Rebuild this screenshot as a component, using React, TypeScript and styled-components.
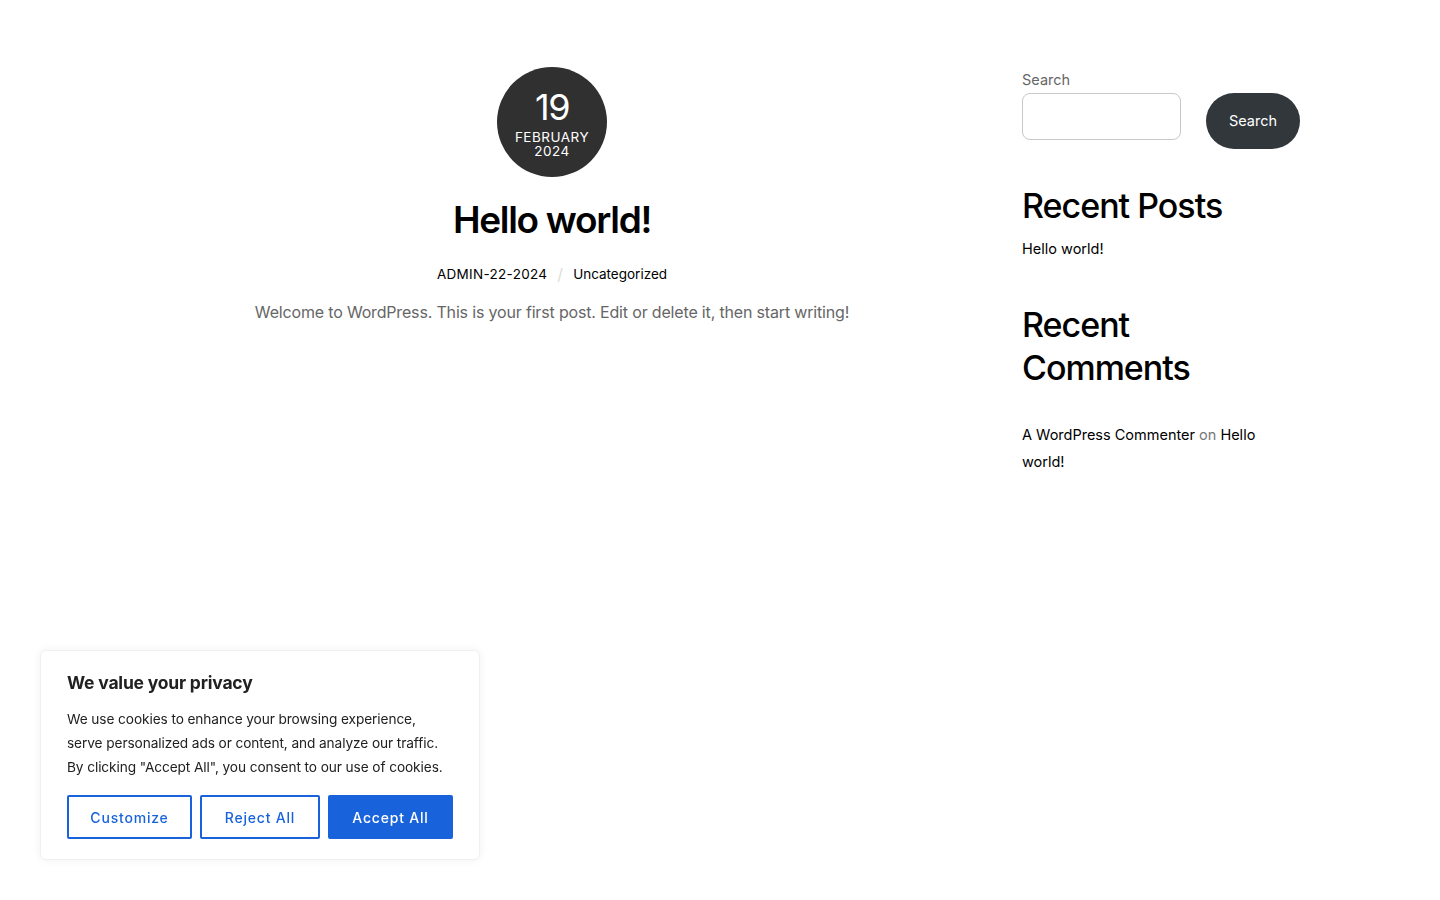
import React from "react";
import styled, { createGlobalStyle } from "styled-components";

const Global = createGlobalStyle`
  html, body { margin: 0; padding: 0; background: #fff; }
  body { font-family: Inter, "Liberation Sans", sans-serif; color: #000; }
  * { box-sizing: border-box; }
`;

const Page = styled.div`
  width: 1440px;
  min-height: 900px;
  display: grid;
  grid-template-columns: 1022px 278px;
  padding-top: 67px;
`;

const Main = styled.main`
  display: flex;
  justify-content: center;
  padding-left: 82px;
`;

const Article = styled.article`
  display: flex;
  flex-direction: column;
  align-items: center;
`;

const DateBadge = styled.div`
  width: 110px;
  height: 110px;
  border-radius: 50%;
  background: #303030;
  color: #fff;
  display: flex;
  flex-direction: column;
  align-items: center;
  justify-content: center;
  padding-top: 4px;
`;

const Day = styled.span`
  font-size: 36px;
  line-height: 34px;
  letter-spacing: -1.5px;
  font-weight: 400;
`;

const Month = styled.span<{ $gap?: number }>`
  font-size: 13.5px;
  line-height: 14px;
  letter-spacing: 0.5px;
  margin-top: ${(p) => p.$gap ?? 0}px;
`;

const Title = styled.h1`
  margin: 20px 0 0;
  font-size: 37px;
  line-height: 46px;
  font-weight: 600;
  letter-spacing: -1.3px;
`;

const Meta = styled.div`
  margin-top: 21px;
  display: flex;
  align-items: center;
  gap: 10px;
  font-size: 13.5px;
  line-height: 20px;
`;

const Author = styled.span`
  text-transform: uppercase;
  letter-spacing: 0.3px;
`;

const Sep = styled.span`
  color: #ddd;
  font-size: 16px;
`;

const Excerpt = styled.p`
  margin: 16px 0 0;
  font-size: 16px;
  line-height: 24px;
  color: #666;
  letter-spacing: -0.17px;
  white-space: nowrap;
`;

const Sidebar = styled.aside`
  display: flex;
  flex-direction: column;
  padding-top: 3px;
`;

const Label = styled.label`
  font-size: 14.5px;
  line-height: 20px;
  color: #666;
`;

const SearchRow = styled.div`
  display: flex;
  align-items: flex-start;
  gap: 25px;
  margin-top: 3px;
`;

const Input = styled.input`
  width: 159px;
  height: 47px;
  border: 1px solid #c8c8c8;
  border-radius: 8px;
  outline: none;
`;

const SearchButton = styled.button`
  width: 94px;
  height: 56px;
  border: none;
  border-radius: 28px;
  background: #32373c;
  color: #fff;
  font-family: inherit;
  font-size: 14.5px;
  padding-bottom: 2px;
`;

const WidgetTitle = styled.h2<{ $top: number }>`
  margin: ${(p) => p.$top}px 0 0;
  font-size: 34px;
  line-height: 43px;
  font-weight: 500;
  letter-spacing: -1px;
`;

const WidgetText = styled.p<{ $top: number }>`
  margin: ${(p) => p.$top}px 0 0;
  font-size: 14.5px;
  line-height: 27px;
  color: #000;
`;

const Muted = styled.span`
  color: #777;
`;

const Banner = styled.div`
  position: fixed;
  left: 40px;
  top: 650px;
  width: 440px;
  height: 210px;
  background: #fff;
  border: 1px solid #f0f0f0;
  border-radius: 6px;
  box-shadow: 0 0 10px rgba(0, 0, 0, 0.06);
  padding: 20px 28px 20px 26px;
  color: #212121;
`;

const BannerTitle = styled.h3`
  margin: 0;
  font-size: 17.5px;
  line-height: 24px;
  font-weight: 700;
  letter-spacing: -0.2px;
`;

const BannerText = styled.p`
  margin: 12px 0 0;
  font-size: 13.7px;
  line-height: 24px;
  letter-spacing: -0.1px;
`;

const Buttons = styled.div`
  display: flex;
  gap: 8px;
  margin-top: 16px;
`;

const CookieButton = styled.button<{ $w: number; $solid?: boolean }>`
  flex: 0 0 ${(p) => p.$w}px;
  height: 44px;
  border: 2px solid #1863dc;
  border-radius: 2px;
  background: ${(p) => (p.$solid ? "#1863dc" : "#fff")};
  color: ${(p) => (p.$solid ? "#fff" : "#1863dc")};
  font-family: inherit;
  font-size: 14px;
  font-weight: 500;
  letter-spacing: 0.8px;
`;

export default function App() {
  return (
    <>
      <Global />
      <Page>
        <Main>
          <Article>
            <DateBadge>
              <Day>19</Day>
              <Month $gap={6}>FEBRUARY</Month>
              <Month>2024</Month>
            </DateBadge>
            <Title>Hello world!</Title>
            <Meta>
              <Author>admin-22-2024</Author>
              <Sep>/</Sep>
              <span>Uncategorized</span>
            </Meta>
            <Excerpt>
              Welcome to WordPress. This is your first post. Edit or delete it, then start writing!
            </Excerpt>
          </Article>
        </Main>
        <Sidebar>
          <Label>Search</Label>
          <SearchRow>
            <Input />
            <SearchButton>Search</SearchButton>
          </SearchRow>
          <WidgetTitle $top={35}>Recent Posts</WidgetTitle>
          <WidgetText $top={8}>Hello world!</WidgetText>
          <WidgetTitle $top={41}>Recent Comments</WidgetTitle>
          <WidgetText $top={32}>
            A WordPress Commenter <Muted>on</Muted> Hello world!
          </WidgetText>
        </Sidebar>
      </Page>
      <Banner>
        <BannerTitle>We value your privacy</BannerTitle>
        <BannerText>
          We use cookies to enhance your browsing experience, serve personalized ads or content,
          and analyze our traffic. By clicking "Accept All", you consent to our use of cookies.
        </BannerText>
        <Buttons>
          <CookieButton $w={125}>Customize</CookieButton>
          <CookieButton $w={120}>Reject All</CookieButton>
          <CookieButton $w={125} $solid>
            Accept All
          </CookieButton>
        </Buttons>
      </Banner>
    </>
  );
}
